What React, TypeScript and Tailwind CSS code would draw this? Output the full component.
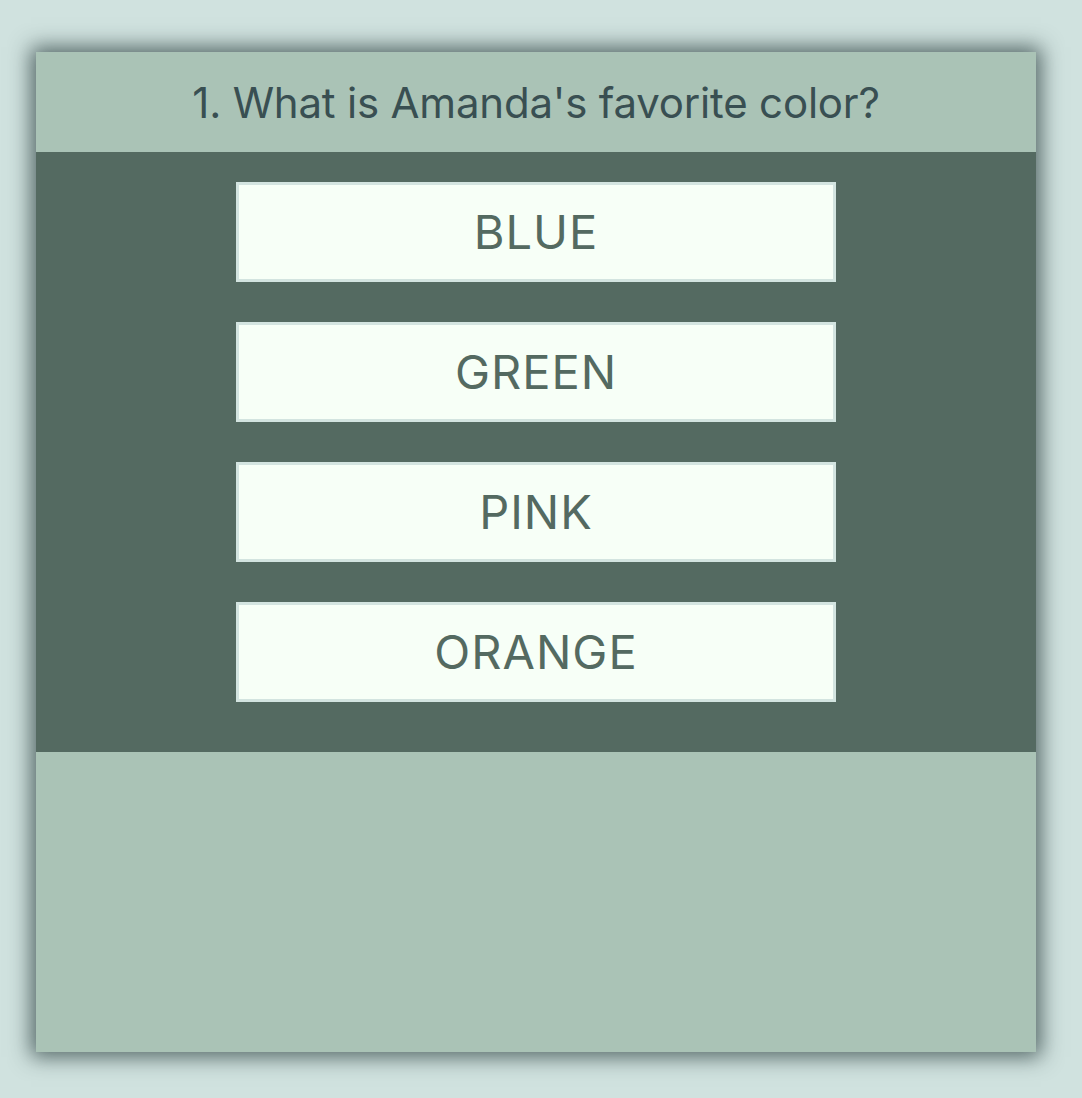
import React from 'react'

const answers = ['BLUE', 'GREEN', 'PINK', 'ORANGE']

export default function App() {
    return (
        <div className="min-h-[1098px] w-full bg-[#d0e2df] pt-[52px] pl-[36px]" style={{ fontFamily: 'Inter, "Open Sans", sans-serif' }}>
            <div className="w-[1000px] h-[1000px] bg-[#aac3b6] flex flex-col shadow-[0_0_20px_5px_rgba(30,50,50,0.7)]">
                {/* Question header */}
                <div className="h-[100px] flex items-center justify-center">
                    <h1 className="text-[42px] text-[#394f52] font-normal tracking-[-0.2px]">
                        1. What is Amanda's favorite color?
                    </h1>
                </div>

                {/* Answers */}
                <div className="bg-[#546a61] flex flex-col items-center gap-[40px] pt-[30px] pb-[50px]">
                    {answers.map((a) => (
                        <button
                            key={a}
                            className="w-[600px] h-[100px] bg-[#f7fff7] border-[3px] border-[#d3e4e0] text-[#546a61] text-[47px] tracking-[1px] flex items-center justify-center"
                        >
                            {a}
                        </button>
                    ))}
                </div>
            </div>
        </div>
    )
}
